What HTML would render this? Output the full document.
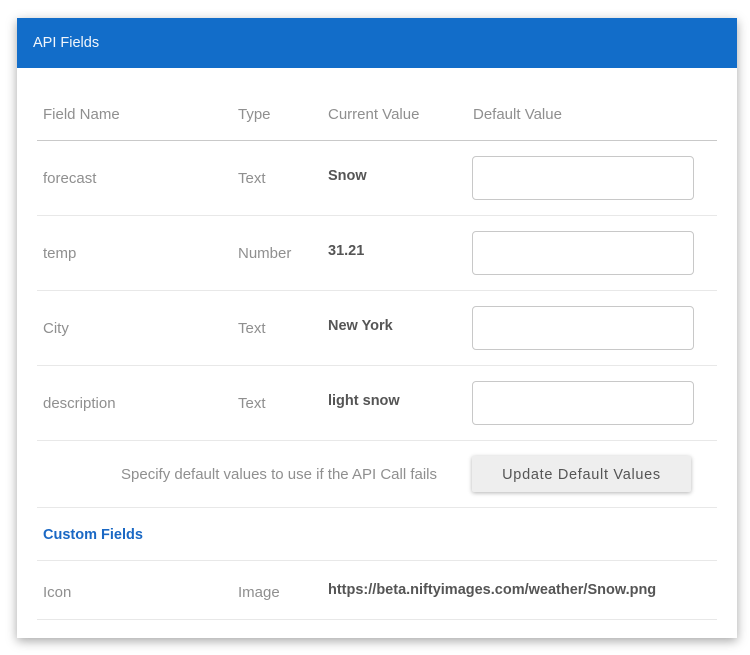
<!DOCTYPE html>
<html><head><meta charset="utf-8"><style>
*{margin:0;padding:0;box-sizing:border-box}
body{width:750px;height:655px;background:#fff;font-family:"Liberation Sans",Arial,sans-serif;position:relative;overflow:hidden}
.card{position:absolute;left:17px;top:18px;width:720px;height:620px;background:#fff;box-shadow:0 3px 10px rgba(0,0,0,.35)}
.hdr{position:absolute;left:0;top:0;width:720px;height:50px;background:#126dc9;color:#f2f6fb;font-size:14.5px;line-height:51px;padding-left:16px}
.t{position:absolute;font-size:15px;color:#8f8f8f;white-space:nowrap;line-height:16px;margin-top:1px}
.b{color:#555;font-weight:bold;font-size:14.5px}
.ln{position:absolute;left:20px;width:680px;height:1px;background:#e8e8e8}
.inp{position:absolute;left:455px;width:222px;height:44px;border:1px solid #c8c8c8;border-radius:4px}
.btn{position:absolute;left:455px;top:438px;width:219px;height:36px;background:#eee;border-radius:2px;box-shadow:0 1px 4px rgba(0,0,0,.3);color:#555;font-size:14.5px;line-height:38px;text-align:center;letter-spacing:.7px}
</style></head><body>
<div class="card">
<div class="hdr">API Fields</div>
<div class="t" style="left:26px;top:88px">Field Name</div>
<div class="t" style="left:221px;top:88px">Type</div>
<div class="t" style="left:311px;top:88px">Current Value</div>
<div class="t" style="left:456px;top:88px">Default Value</div>
<div class="ln" style="top:122px;background:#c9c9c9"></div>

<div class="t" style="left:26px;top:152px">forecast</div>
<div class="t" style="left:221px;top:152px">Text</div>
<div class="t b" style="left:311px;top:149px">Snow</div>
<div class="inp" style="top:138px"></div>
<div class="ln" style="top:197px"></div>

<div class="t" style="left:26px;top:227px">temp</div>
<div class="t" style="left:221px;top:227px">Number</div>
<div class="t b" style="left:311px;top:224px">31.21</div>
<div class="inp" style="top:213px"></div>
<div class="ln" style="top:272px"></div>

<div class="t" style="left:26px;top:302px">City</div>
<div class="t" style="left:221px;top:302px">Text</div>
<div class="t b" style="left:311px;top:299px">New York</div>
<div class="inp" style="top:288px"></div>
<div class="ln" style="top:347px"></div>

<div class="t" style="left:26px;top:377px">description</div>
<div class="t" style="left:221px;top:377px">Text</div>
<div class="t b" style="left:311px;top:374px">light snow</div>
<div class="inp" style="top:363px"></div>
<div class="ln" style="top:422px"></div>

<div class="t" style="left:104px;top:448px">Specify default values to use if the API Call fails</div>
<div class="btn">Update Default Values</div>
<div class="ln" style="top:489px"></div>

<div class="t b" style="left:26px;top:508px;color:#1a68c4">Custom Fields</div>
<div class="ln" style="top:542px"></div>

<div class="t" style="left:26px;top:566px">Icon</div>
<div class="t" style="left:221px;top:566px">Image</div>
<div class="t b" style="left:311px;top:563px">https://beta.niftyimages.com/weather/Snow.png</div>
<div class="ln" style="top:601px"></div>
</div>
</body></html>
